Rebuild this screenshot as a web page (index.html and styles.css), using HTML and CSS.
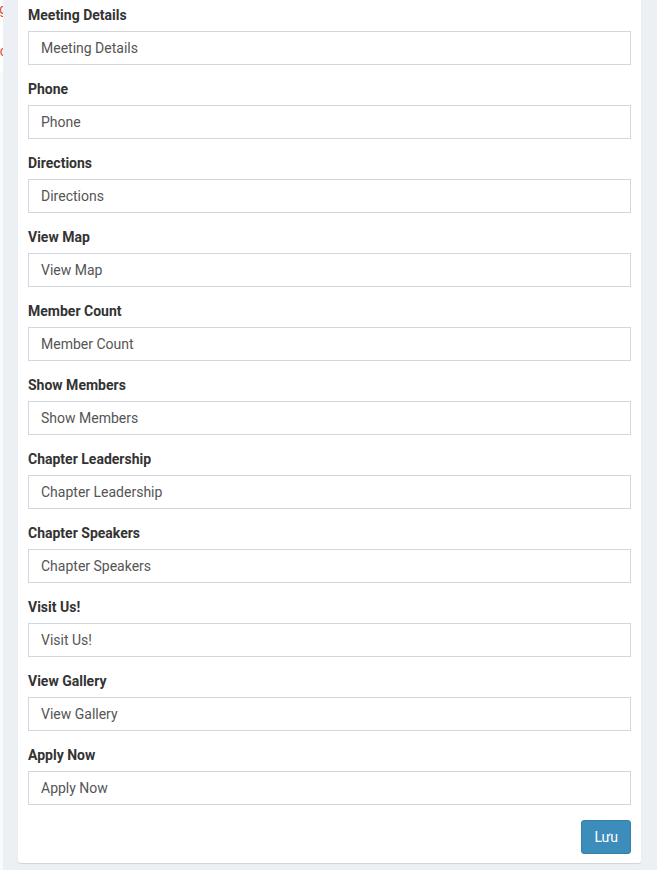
FILE: index.html
```html
<!DOCTYPE html>
<html lang="vi">
<head>
    <meta charset="UTF-8">
    <meta name="viewport" content="width=device-width, initial-scale=1.0">
    <title>Chapter Settings</title>
    <link rel="stylesheet" href="styles.css">
</head>
<body>
    <div class="layout">
        <div class="side-edge">
            <div class="side-note">
                <span class="note-line">Meeting</span>
                <span class="note-line">Etc</span>
            </div>
        </div>
        <div class="content">
            <form class="box" onsubmit="return false;">
                <div class="form-group">
                    <label for="meetingDetails">Meeting Details</label>
                    <input type="text" id="meetingDetails" class="form-control" value="Meeting Details">
                </div>
                <div class="form-group">
                    <label for="phone">Phone</label>
                    <input type="text" id="phone" class="form-control" value="Phone">
                </div>
                <div class="form-group">
                    <label for="directions">Directions</label>
                    <input type="text" id="directions" class="form-control" value="Directions">
                </div>
                <div class="form-group">
                    <label for="viewMap">View Map</label>
                    <input type="text" id="viewMap" class="form-control" value="View Map">
                </div>
                <div class="form-group">
                    <label for="memberCount">Member Count</label>
                    <input type="text" id="memberCount" class="form-control" value="Member Count">
                </div>
                <div class="form-group">
                    <label for="showMembers">Show Members</label>
                    <input type="text" id="showMembers" class="form-control" value="Show Members">
                </div>
                <div class="form-group">
                    <label for="chapterLeadership">Chapter Leadership</label>
                    <input type="text" id="chapterLeadership" class="form-control" value="Chapter Leadership">
                </div>
                <div class="form-group">
                    <label for="chapterSpeakers">Chapter Speakers</label>
                    <input type="text" id="chapterSpeakers" class="form-control" value="Chapter Speakers">
                </div>
                <div class="form-group">
                    <label for="visitUs">Visit Us!</label>
                    <input type="text" id="visitUs" class="form-control" value="Visit Us!">
                </div>
                <div class="form-group">
                    <label for="viewGallery">View Gallery</label>
                    <input type="text" id="viewGallery" class="form-control" value="View Gallery">
                </div>
                <div class="form-group">
                    <label for="applyNow">Apply Now</label>
                    <input type="text" id="applyNow" class="form-control" value="Apply Now">
                </div>
                <div class="form-actions">
                    <button type="submit" class="btn-primary">Lưu</button>
                </div>
            </form>
        </div>
    </div>
</body>
</html>
```

FILE: styles.css
```css
html, body {
    margin: 0;
    padding: 0;
}
body {
    background-color: #ecf0f5;
    font-family: Roboto, "Liberation Sans", Arial, sans-serif;
    font-size: 14px;
    color: #333;
}
.layout {
    display: flex;
    min-height: 870px;
}
.side-edge {
    width: 3px;
    flex-shrink: 0;
    background-color: #f9fafc;
    overflow: hidden;
}
.side-note {
    background-color: #fff;
    height: 72px;
    display: flex;
    flex-direction: column;
    align-items: flex-end;
}
.note-line {
    color: #dd4b39;
    font-size: 14px;
    line-height: 18px;
    white-space: nowrap;
    margin-right: -4px;
}
.note-line + .note-line {
    margin-top: 24px;
}
.content {
    padding-left: 15px;
}
.box {
    width: 603px;
    background-color: #fff;
    padding: 6px 10px 9px;
    border-radius: 0 0 3px 3px;
    box-shadow: 0 1px 1px rgba(0, 0, 0, 0.12);
}
.form-group {
    margin-bottom: 15px;
}
label {
    display: block;
    margin-bottom: 7px;
    font-weight: bold;
    line-height: 18px;
    color: #333;
}
.form-control {
    display: block;
    box-sizing: border-box;
    width: 100%;
    height: 34px;
    margin: 0;
    padding: 6px 12px;
    border: 1px solid #d2d6de;
    border-radius: 0;
    font-family: inherit;
    font-size: 14px;
    color: #555;
    background-color: #fff;
}
.form-actions {
    display: flex;
    justify-content: flex-end;
}
.btn-primary {
    background-color: #3c8dbc;
    border: 1px solid #367fa9;
    color: #fff;
    font-family: inherit;
    font-size: 14px;
    height: 34px;
    padding: 0 12px;
    border-radius: 3px;
    cursor: pointer;
}
.btn-primary:hover {
    background-color: #367fa9;
}
```
